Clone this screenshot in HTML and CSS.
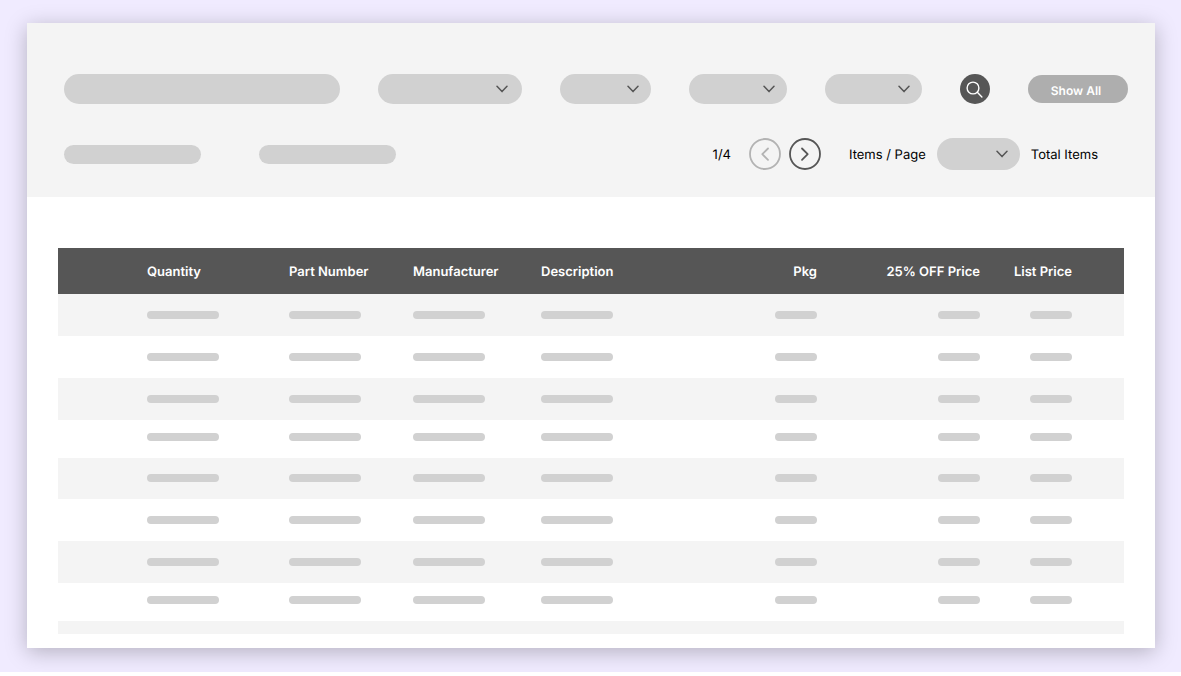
FILE: index.html
```html
<!DOCTYPE html>
<html lang="en">
<head>
<meta charset="utf-8">
<meta name="viewport" content="width=device-width, initial-scale=1">
<title>Parts list</title>
<link rel="stylesheet" href="styles.css">
</head>
<body>
<main class="stage">
  <section class="card">
    <header class="toolbar">
      <form class="filters">
        <input class="pill search-field" type="text" aria-label="Search">
        <span class="select select-lg">
          <select class="pill" aria-label="Filter 1"><option></option></select>
          <svg class="chevron" viewBox="0 0 12 8"><path d="M1 1.2 6 6.6 11 1.2"/></svg>
        </span>
        <span class="select select-sm">
          <select class="pill" aria-label="Filter 2"><option></option></select>
          <svg class="chevron" viewBox="0 0 12 8"><path d="M1 1.2 6 6.6 11 1.2"/></svg>
        </span>
        <span class="select select-md">
          <select class="pill" aria-label="Filter 3"><option></option></select>
          <svg class="chevron" viewBox="0 0 12 8"><path d="M1 1.2 6 6.6 11 1.2"/></svg>
        </span>
        <span class="select select-end">
          <select class="pill" aria-label="Filter 4"><option></option></select>
          <svg class="chevron" viewBox="0 0 12 8"><path d="M1 1.2 6 6.6 11 1.2"/></svg>
        </span>
        <button class="search-button" type="button" aria-label="Run search">
          <svg viewBox="0 0 30 30"><circle cx="13" cy="14" r="5.9"/><path d="m17.300 18.300 4.600 4.600"/></svg>
        </button>
        <button class="show-all" type="button">Show All</button>
      </form>
      <div class="status">
        <span class="label-bar"></span>
        <span class="label-bar"></span>
        <nav class="pager" aria-label="Pages">
          <span class="caption page-count">1/4</span>
          <button class="step step-off" type="button" aria-label="Previous page">
            <svg viewBox="0 0 32 32"><circle cx="16" cy="16" r="15"/><path d="m19 10.500-5.700 5.700 5.700 5.700"/></svg>
          </button>
          <button class="step" type="button" aria-label="Next page">
            <svg viewBox="0 0 32 32"><circle cx="16" cy="16" r="15"/><path d="m13 10.500 5.700 5.700-5.700 5.700"/></svg>
          </button>
        </nav>
        <div class="page-size">
          <label class="caption" for="page-size">Items / Page</label>
          <span class="select select-page">
            <select class="pill" id="page-size"><option></option></select>
            <svg class="chevron" viewBox="0 0 12 8"><path d="M1 1.2 6 6.600 11 1.2"/></svg>
          </span>
          <span class="caption">Total Items</span>
        </div>
      </div>
    </header>
    <div class="content">
      <table class="parts">
        <colgroup>
          <col class="col-lead"><col class="col-qty"><col class="col-part"><col class="col-maker"><col>
          <col class="col-pkg"><col class="col-sale"><col class="col-list"><col class="col-end">
        </colgroup>
        <thead>
          <tr><td></td><th>Quantity</th><th>Part Number</th><th>Manufacturer</th><th>Description</th><th class="num">Pkg</th><th class="num">25% OFF Price</th><th class="num">List Price</th><td></td></tr>
        </thead>
        <tbody>
          <tr><td></td><td><i class="bar"></i></td><td><i class="bar"></i></td><td><i class="bar"></i></td><td><i class="bar"></i></td><td><i class="bar short"></i></td><td><i class="bar short"></i></td><td><i class="bar short"></i></td><td></td></tr>
          <tr><td></td><td><i class="bar"></i></td><td><i class="bar"></i></td><td><i class="bar"></i></td><td><i class="bar"></i></td><td><i class="bar short"></i></td><td><i class="bar short"></i></td><td><i class="bar short"></i></td><td></td></tr>
          <tr><td></td><td><i class="bar"></i></td><td><i class="bar"></i></td><td><i class="bar"></i></td><td><i class="bar"></i></td><td><i class="bar short"></i></td><td><i class="bar short"></i></td><td><i class="bar short"></i></td><td></td></tr>
          <tr class="compact"><td></td><td><i class="bar"></i></td><td><i class="bar"></i></td><td><i class="bar"></i></td><td><i class="bar"></i></td><td><i class="bar short"></i></td><td><i class="bar short"></i></td><td><i class="bar short"></i></td><td></td></tr>
          <tr class="middle"><td></td><td><i class="bar"></i></td><td><i class="bar"></i></td><td><i class="bar"></i></td><td><i class="bar"></i></td><td><i class="bar short"></i></td><td><i class="bar short"></i></td><td><i class="bar short"></i></td><td></td></tr>
          <tr><td></td><td><i class="bar"></i></td><td><i class="bar"></i></td><td><i class="bar"></i></td><td><i class="bar"></i></td><td><i class="bar short"></i></td><td><i class="bar short"></i></td><td><i class="bar short"></i></td><td></td></tr>
          <tr><td></td><td><i class="bar"></i></td><td><i class="bar"></i></td><td><i class="bar"></i></td><td><i class="bar"></i></td><td><i class="bar short"></i></td><td><i class="bar short"></i></td><td><i class="bar short"></i></td><td></td></tr>
          <tr class="compact"><td></td><td><i class="bar"></i></td><td><i class="bar"></i></td><td><i class="bar"></i></td><td><i class="bar"></i></td><td><i class="bar short"></i></td><td><i class="bar short"></i></td><td><i class="bar short"></i></td><td></td></tr>
          <tr class="cut"><td colspan="9"></td></tr>
        </tbody>
      </table>
    </div>
  </section>
</main>
</body>
</html>
```
FILE: styles.css
```css
* {
  box-sizing: border-box;
}

body {
  margin: 0;
  background: #fff;
  color: #000;
  font: 13px/20px Inter, "Liberation Sans", sans-serif;
  text-rendering: geometricPrecision;
}

button,
select,
input {
  margin: 0;
  padding: 0;
  border: 0;
  font: inherit;
  text-rendering: inherit;
}

svg {
  display: block;
  fill: none;
  stroke: currentColor;
  stroke-linecap: round;
  stroke-linejoin: round;
}

.stage {
  padding: 23px 26px 24px 27px;
  background: #f0ebff;
  overflow: hidden;
}

.card {
  background: #fff;
  box-shadow: 0 4px 20px rgba(0, 0, 0, 0.25);
}

.toolbar {
  display: flex;
  flex-direction: column;
  gap: 34px;
  padding: 51px 27px 27px 37px;
  background: #f4f4f4;
}

.filters {
  display: flex;
  align-items: center;
  gap: 38px;
}

.pill {
  display: block;
  width: 100%;
  height: 30px;
  border-radius: 16px;
  background: #d1d1d1;
  appearance: none;
}

.search-field {
  flex: 1;
  min-width: 0;
  padding: 0 16px;
}

.select {
  position: relative;
  flex: none;
  color: #565656;
}

.select-lg {
  width: 144px;
}

.select-md {
  width: 98px;
}

.select-end {
  width: 97px;
}

.select-sm {
  width: 91px;
}

.select-page {
  width: 83px;
}

.select-page .pill {
  height: 32px;
}

.chevron {
  position: absolute;
  top: 50%;
  right: 12px;
  width: 12px;
  height: 8px;
  margin-top: -4px;
  stroke-width: 1.5;
  pointer-events: none;
}

.select-lg .chevron {
  right: 14px;
}

.search-button {
  flex: none;
  width: 30px;
  height: 30px;
  border-radius: 50%;
  background: #565656;
  color: #fff;
  stroke-width: 1.4;
}

.show-all {
  flex: none;
  width: 100px;
  height: 28px;
  padding: 3px 4px 0 0;
  border-radius: 14px;
  background: #aeaeae;
  color: #fff;
  font-size: 12px;
  font-weight: 600;
}

.status {
  display: flex;
  align-items: center;
  gap: 58px;
  padding-right: 30px;
}

.caption {
  padding-top: 2px;
}

.label-bar {
  width: 137px;
  height: 19px;
  border-radius: 10px;
  background: #d1d1d1;
}

.pager {
  display: flex;
  align-items: center;
  gap: 8px;
  margin-left: auto;
}

.page-count {
  margin-right: 10px;
}

.step {
  width: 32px;
  height: 32px;
  background: none;
  color: #565656;
  stroke-width: 1.8;
}

.step-off {
  color: #b3b3b3;
}

.page-size {
  display: flex;
  align-items: center;
  gap: 11px;
  margin-left: -30px;
}

.content {
  padding: 51px 31px 14px;
}

.parts {
  width: 100%;
  table-layout: fixed;
  border-collapse: collapse;
}

.col-lead {
  width: 89px;
}

.col-qty {
  width: 142px;
}

.col-part {
  width: 124px;
}

.col-maker {
  width: 128px;
}

.col-pkg {
  width: 80px;
}

.col-sale {
  width: 163px;
}

.col-list {
  width: 92px;
}

.col-end {
  width: 52px;
}

.parts th,
.parts td {
  padding: 0;
}

.parts thead tr {
  height: 46px;
  background: #565656;
  color: #fff;
}

.parts th {
  padding-top: 2px;
  font-weight: 600;
  text-align: left;
  white-space: nowrap;
}

.parts .num {
  text-align: right;
}

.parts tbody tr {
  height: 42px;
}

.parts tbody tr:nth-child(odd) {
  background: #f4f4f4;
}

.parts tbody td {
  padding-top: 17px;
  vertical-align: top;
}

.parts tbody .middle {
  height: 41px;
}

.parts tbody .middle td {
  padding-top: 16px;
}

.parts tbody .compact {
  height: 38px;
}

.parts tbody .compact td {
  padding-top: 13px;
}

.parts tbody .cut {
  height: 13px;
}

.parts tbody .cut td {
  padding: 0;
}

.bar {
  display: block;
  width: 72px;
  height: 8px;
  border-radius: 4px;
  background: #d1d1d1;
}

.bar.short {
  width: 42px;
  margin-left: auto;
}
```
